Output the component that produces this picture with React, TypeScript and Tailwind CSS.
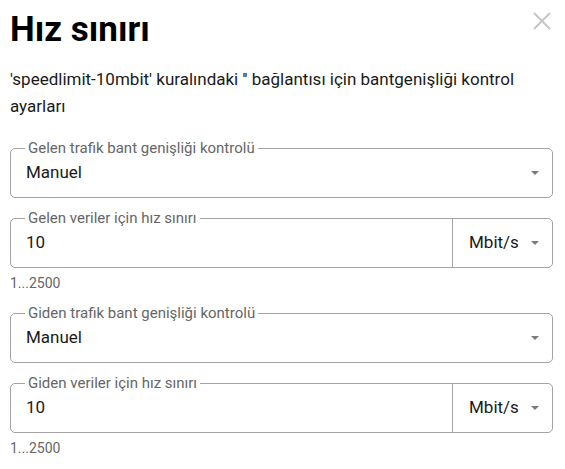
import React from 'react';

function Caret() {
  return (
    <svg width="8" height="4" viewBox="0 0 8 4" className="shrink-0">
      <path d="M0 0 L8 0 L4 4 Z" fill="#7a7a7a" />
    </svg>
  );
}

function SelectField({ label, value }: { label: string; value: string }) {
  return (
    <div className="relative flex h-[50px] items-center rounded-[5px] border border-[#a3a3a3] pl-[15px] pr-[13px]">
      <span className="absolute -top-[10px] left-[14px] bg-white px-[3px] text-[15px] leading-[18px] text-[#666666]">
        {label}
      </span>
      <span className="flex-1 text-[17px] text-[#1a1a1a]">{value}</span>
      <Caret />
    </div>
  );
}

function SpeedField({ label, value, unit }: { label: string; value: string; unit: string }) {
  return (
    <div>
      <div className="relative flex h-[50px] items-stretch rounded-[5px] border border-[#a3a3a3]">
        <span className="absolute -top-[10px] left-[14px] bg-white px-[3px] text-[15px] leading-[18px] text-[#666666]">
          {label}
        </span>
        <div className="flex flex-1 items-center pl-[15px] text-[17px] text-[#1a1a1a]">{value}</div>
        <div className="flex w-[100px] items-center border-l border-[#a3a3a3] pl-[16px] pr-[13px]">
          <span className="flex-1 text-[17px] text-[#1a1a1a]">{unit}</span>
          <Caret />
        </div>
      </div>
      <div className="mt-[7px] text-[14px] leading-[17px] text-[#666666]">1...2500</div>
    </div>
  );
}

export default function App() {
  return (
    <div
      className="min-h-screen bg-white pl-[10px] pr-[12px] pt-[8px]"
      style={{ fontFamily: 'Roboto, "Liberation Sans", sans-serif' }}
    >
      <div className="flex items-start justify-between">
        <h1 className="text-[35px] font-bold leading-[44px] text-black">Hız sınırı</h1>
        <button className="mt-[4px] mr-[2px] text-[#c4c4c4]" aria-label="Kapat">
          <svg width="18" height="18" viewBox="0 0 18 18">
            <path d="M1 1 L17 17 M17 1 L1 17" stroke="currentColor" strokeWidth="1.8" />
          </svg>
        </button>
      </div>
      <p className="mt-[14px] text-[17px] leading-[27px] text-[#1a1a1a]">
        'speedlimit-10mbit' kuralındaki '' bağlantısı için bantgenişliği kontrol ayarları
      </p>
      <div className="mt-[28px] flex flex-col">
        <SelectField label="Gelen trafik bant genişliği kontrolü" value="Manuel" />
        <div className="mt-[20px]">
          <SpeedField label="Gelen veriler için hız sınırı" value="10" unit="Mbit/s" />
        </div>
        <div className="mt-[21px]">
          <SelectField label="Giden trafik bant genişliği kontrolü" value="Manuel" />
        </div>
        <div className="mt-[20px]">
          <SpeedField label="Giden veriler için hız sınırı" value="10" unit="Mbit/s" />
        </div>
      </div>
    </div>
  );
}
